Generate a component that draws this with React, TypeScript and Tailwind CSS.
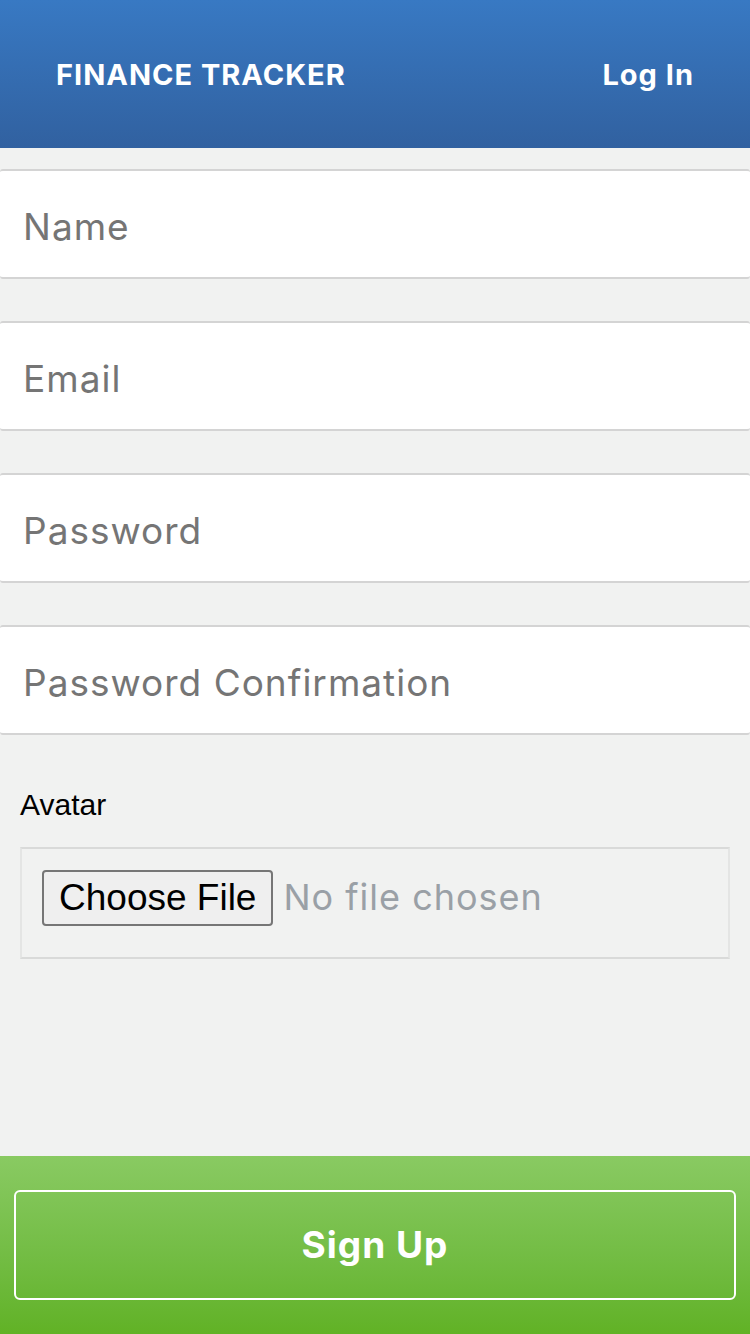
import React from "react";

const fields = [
  { name: "name", type: "text", placeholder: "Name" },
  { name: "email", type: "email", placeholder: "Email" },
  { name: "password", type: "password", placeholder: "Password" },
  { name: "password_confirmation", type: "password", placeholder: "Password Confirmation" },
];

export default function App() {
  return (
    <div className="min-h-[1334px] flex flex-col bg-[#f1f2f1] font-['Inter',sans-serif]">
      {/* header */}
      <header className="h-[148px] flex items-center justify-between px-[56px] pt-[2px] bg-gradient-to-b from-[#3879c3] to-[#3161a0] text-white font-bold">
        <span className="text-[29px] tracking-[1px]">FINANCE TRACKER</span>
        <a href="#" className="text-[29px] tracking-[1px]">Log In</a>
      </header>

      <form className="flex flex-col flex-1">
        <div className="flex flex-col gap-[42px] mt-[21px]">
          {fields.map((f) => (
            <input
              key={f.name}
              name={f.name}
              type={f.type}
              placeholder={f.placeholder}
              className="h-[110px] w-full bg-white border-y-2 border-[#d4d4d4] rounded-[3px] pl-[23px] pt-[4px] text-[37px] tracking-[1px] text-[#333] placeholder:text-[#757575] outline-none"
            />
          ))}
        </div>

        {/* avatar */}
        <div className="px-[20px] pt-[53px]">
          <label className="block text-[30px] leading-[34px] text-black font-['Liberation_Sans',sans-serif]">
            Avatar
          </label>
          <div className="mt-[25px] h-[112px] flex items-center border-2 border-[#d9dad9] border-x-[#e4e5e4] pl-[20px] pb-[10px]">
            <span className="h-[56px] px-[15px] flex items-center rounded-[4px] border-2 border-[#767676] bg-[#efefef] text-[37px] text-black font-['Liberation_Sans',sans-serif]">
              Choose File
            </span>
            <span className="ml-[10px] pb-[2px] text-[36px] tracking-[1px] text-[#9aa0a6]">No file chosen</span>
          </div>
        </div>

        {/* footer */}
        <div className="mt-auto h-[178px] px-[14px] py-[34px] bg-gradient-to-b from-[#89ca62] to-[#61b225]">
          <button
            type="submit"
            className="w-full h-full border-2 border-white rounded-[6px] text-white font-bold text-[37px] tracking-[1px]"
          >
            Sign Up
          </button>
        </div>
      </form>
    </div>
  );
}
